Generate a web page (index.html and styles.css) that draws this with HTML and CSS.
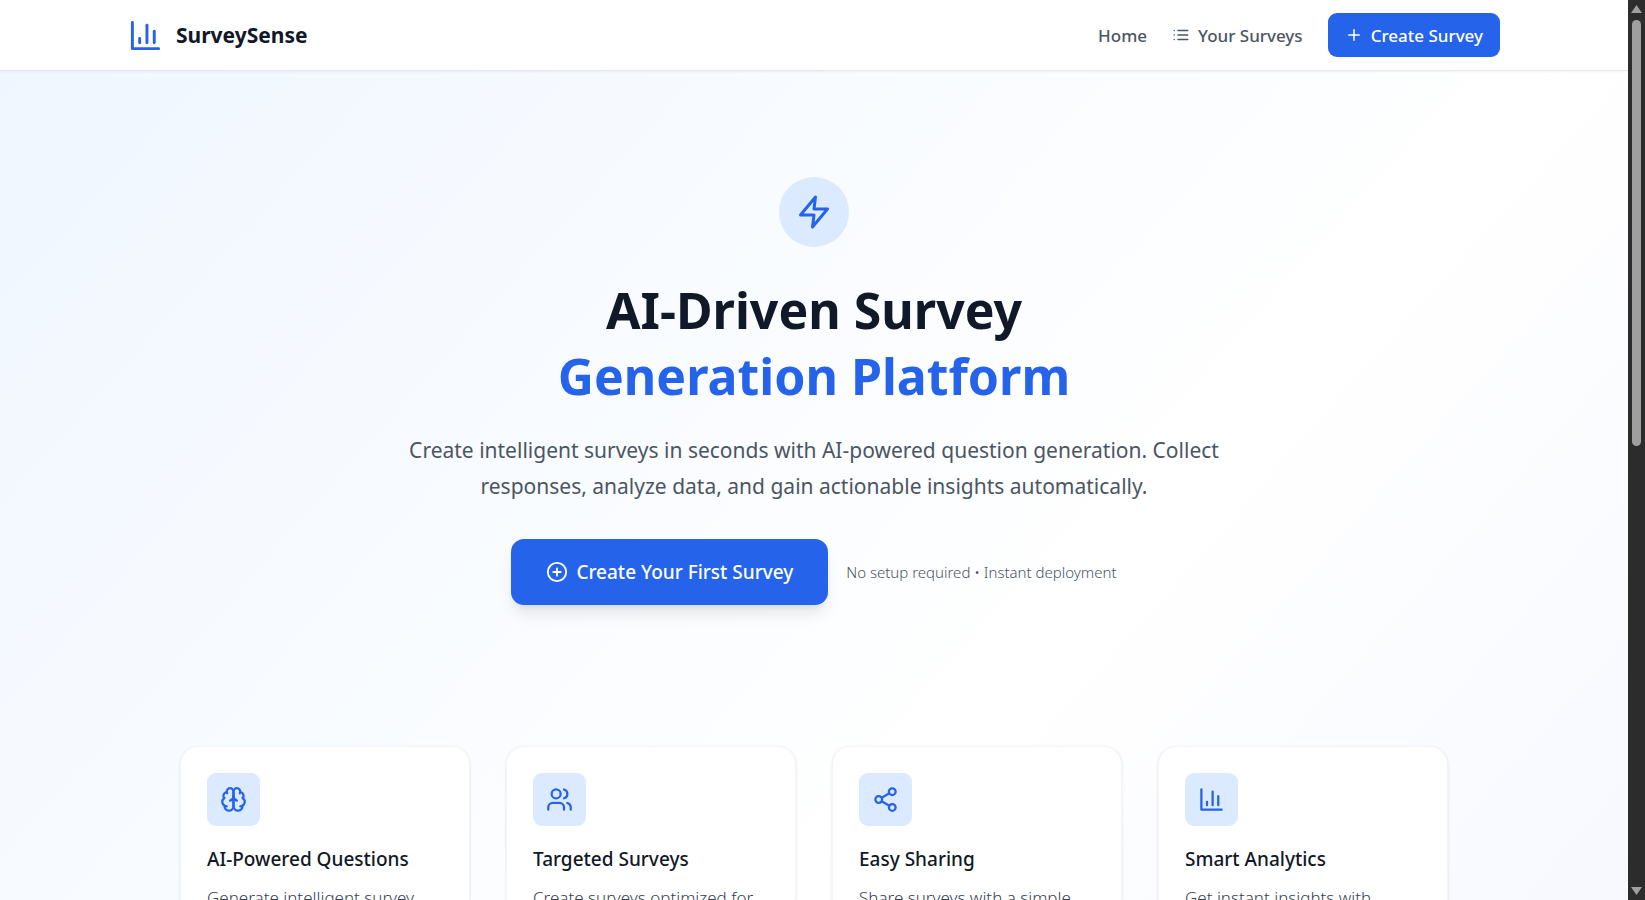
FILE: index.html
```html
<!DOCTYPE html>
<html lang="en">
<head>
<meta charset="utf-8">
<meta name="viewport" content="width=device-width, initial-scale=1">
<title>SurveySense</title>
<link rel="stylesheet" href="styles.css">
</head>
<body>
<div class="window">
  <div class="viewport">
    <div class="page">
      <header class="header">
        <div class="header-inner">
          <a class="brand" href="#">
            <svg class="icon brand-icon" viewBox="0 0 24 24" aria-hidden="true"><path d="M3 3v18h18"/><path d="M18 17V9"/><path d="M13 17V5"/><path d="M8 17v-3"/></svg>
            <span>SurveySense</span>
          </a>
          <nav class="nav">
            <a class="nav-link" href="#">Home</a>
            <a class="nav-link" href="#">
              <svg class="icon nav-icon" viewBox="0 0 24 24" aria-hidden="true"><path d="M8 6h13"/><path d="M8 12h13"/><path d="M8 18h13"/><path d="M3 6h.01"/><path d="M3 12h.01"/><path d="M3 18h.01"/></svg>
              <span>Your Surveys</span>
            </a>
            <a class="nav-button" href="#">
              <svg class="icon nav-icon" viewBox="0 0 24 24" aria-hidden="true"><path d="M5 12h14"/><path d="M12 5v14"/></svg>
              <span>Create Survey</span>
            </a>
          </nav>
        </div>
      </header>
      <main>
        <section class="hero">
          <div class="hero-badge">
            <svg class="icon hero-icon" viewBox="0 0 24 24" aria-hidden="true"><path d="M13 2 3 14h9l-1 8 10-12h-9l1-8z"/></svg>
          </div>
          <h1 class="hero-title">AI-Driven Survey <span class="accent">Generation Platform</span></h1>
          <p class="hero-text">Create intelligent surveys in seconds with AI-powered question generation. Collect responses, analyze data, and gain actionable insights automatically.</p>
          <div class="hero-actions">
            <a class="cta" href="#">
              <svg class="icon cta-icon" viewBox="0 0 24 24" aria-hidden="true"><circle cx="12" cy="12" r="10"/><path d="M8 12h8"/><path d="M12 8v8"/></svg>
              <span>Create Your First Survey</span>
            </a>
            <span class="hero-note">No setup required • Instant deployment</span>
          </div>
        </section>
        <section class="features">
          <article class="card">
            <div class="card-badge"><svg class="icon card-icon" viewBox="0 0 24 24" aria-hidden="true"><path d="M12 5a3 3 0 1 0-5.997.125 4 4 0 0 0-2.526 5.77 4 4 0 0 0 .556 6.588A4 4 0 1 0 12 18Z"/><path d="M12 5a3 3 0 1 1 5.997.125 4 4 0 0 1 2.526 5.77 4 4 0 0 1-.556 6.588A4 4 0 1 1 12 18Z"/><path d="M15 13a4.5 4.5 0 0 1-3-4 4.5 4.5 0 0 1-3 4"/><path d="M17.599 6.5a3 3 0 0 0 .399-1.375"/><path d="M6.003 5.125A3 3 0 0 0 6.401 6.5"/><path d="M3.477 10.896a4 4 0 0 1 .585-.396"/><path d="M19.938 10.5a4 4 0 0 1 .585.396"/><path d="M6 18a4 4 0 0 1-1.967-.516"/><path d="M19.967 17.484A4 4 0 0 1 18 18"/></svg></div>
            <h3 class="card-title">AI-Powered Questions</h3>
            <p class="card-text">Generate intelligent survey</p>
          </article>
          <article class="card">
            <div class="card-badge"><svg class="icon card-icon" viewBox="0 0 24 24" aria-hidden="true"><path d="M16 21v-2a4 4 0 0 0-4-4H6a4 4 0 0 0-4 4v2"/><circle cx="9" cy="7" r="4"/><path d="M22 21v-2a4 4 0 0 0-3-3.87"/><path d="M16 3.13a4 4 0 0 1 0 7.75"/></svg></div>
            <h3 class="card-title">Targeted Surveys</h3>
            <p class="card-text">Create surveys optimized for</p>
          </article>
          <article class="card">
            <div class="card-badge"><svg class="icon card-icon" viewBox="0 0 24 24" aria-hidden="true"><circle cx="18" cy="5" r="3"/><circle cx="6" cy="12" r="3"/><circle cx="18" cy="19" r="3"/><path d="m8.59 13.51 6.83 3.98"/><path d="m15.41 6.51-6.82 3.98"/></svg></div>
            <h3 class="card-title">Easy Sharing</h3>
            <p class="card-text">Share surveys with a simple</p>
          </article>
          <article class="card">
            <div class="card-badge"><svg class="icon card-icon" viewBox="0 0 24 24" aria-hidden="true"><path d="M3 3v18h18"/><path d="M18 17V9"/><path d="M13 17V5"/><path d="M8 17v-3"/></svg></div>
            <h3 class="card-title">Smart Analytics</h3>
            <p class="card-text">Get instant insights with</p>
          </article>
        </section>
      </main>
    </div>
  </div>
  <div class="scrollbar" aria-hidden="true">
    <svg class="arrow" viewBox="0 0 11 8"><path d="M5.500 0 11 8H0z"/></svg>
    <div class="track"><div class="thumb"></div></div>
    <svg class="arrow" viewBox="0 0 11 8"><path d="M5.500 8 11 0H0z"/></svg>
  </div>
</div>
</body>
</html>
```
FILE: styles.css
```css
* { box-sizing: border-box; }

body {
  margin: 0;
  font-family: "Noto Sans", "Open Sans", sans-serif;
  color: #111827;
}

h1, h3, p { margin: 0; }
a { color: inherit; text-decoration: none; }

.window { display: flex; height: 100vh; }
.viewport { flex: 1; min-width: 0; overflow: hidden; }

.page {
  min-height: 204vh;
  background: linear-gradient(to bottom right, #eff6ff, #ffffff, #eef2ff);
}

.icon {
  display: block;
  flex: none;
  fill: none;
  stroke: currentColor;
  stroke-width: 2;
  stroke-linecap: round;
  stroke-linejoin: round;
}

/* Header */
.header {
  background: #ffffff;
  border-bottom: 1px solid #e5e7eb;
  box-shadow: 0 1px 2px rgba(0, 0, 0, 0.05);
}
.header-inner {
  display: flex;
  align-items: center;
  justify-content: space-between;
  max-width: 1408px;
  height: 70px;
  margin: 0 auto;
  padding: 0 18px;
}
.brand {
  display: flex;
  align-items: center;
  gap: 13px;
  font-size: 21px;
  font-weight: 700;
}
.brand-icon { width: 35px; height: 35px; color: #2563eb; }
.nav {
  display: flex;
  align-items: center;
  gap: 25px;
  font-size: 17px;
  font-weight: 500;
}
.nav-link { display: flex; align-items: center; gap: 8px; color: #4b5563; }
.nav-icon { width: 18px; height: 18px; }
.nav-button {
  display: flex;
  align-items: center;
  gap: 8px;
  height: 44px;
  padding: 0 17px;
  border-radius: 9px;
  background: #2563eb;
  color: #ffffff;
}

/* Hero */
.hero {
  display: flex;
  flex-direction: column;
  align-items: center;
  max-width: 986px;
  margin: 0 auto;
  padding: 106px 18px 0;
  text-align: center;
}
.hero-badge {
  display: grid;
  place-items: center;
  width: 70px;
  height: 70px;
  border-radius: 50%;
  background: #dbeafe;
  color: #2563eb;
}
.hero-icon { width: 36px; height: 36px; }
.hero-title {
  margin-top: 30px;
  font-size: 50px;
  font-weight: 700;
  line-height: 66px;
}
.accent { display: block; color: #2563eb; }
.hero-text {
  max-width: 845px;
  margin-top: 23px;
  font-size: 21px;
  line-height: 36px;
  color: #4b5563;
}
.hero-actions { display: flex; align-items: center; gap: 18px; margin-top: 35px; }
.cta {
  display: flex;
  align-items: center;
  gap: 8px;
  height: 66px;
  padding: 0 35px;
  border-radius: 13px;
  background: #2563eb;
  box-shadow: 0 11px 16px -3px rgba(0, 0, 0, 0.1), 0 4px 7px -4px rgba(0, 0, 0, 0.1);
  color: #ffffff;
  font-size: 19px;
  font-weight: 500;
}
.cta-icon { width: 22px; height: 22px; }
.hero-note { font-size: 15px; font-weight: 300; color: #4b5563; }

/* Features */
.features {
  display: grid;
  grid-template-columns: repeat(4, 1fr);
  gap: 36px;
  max-width: 1268px;
  margin: 141px auto 0;
}
.card {
  min-height: 260px;
  padding: 26px;
  border: 1px solid #f3f4f6;
  border-radius: 18px;
  background: #ffffff;
  box-shadow: 0 1px 3px rgba(0, 0, 0, 0.1), 0 1px 2px -1px rgba(0, 0, 0, 0.1);
}
.card-badge {
  display: grid;
  place-items: center;
  width: 53px;
  height: 53px;
  border-radius: 9px;
  background: #dbeafe;
  color: #2563eb;
}
.card-icon { width: 27px; height: 27px; }
.card-title {
  margin-top: 18px;
  font-size: 19px;
  font-weight: 500;
  line-height: 30px;
}
.card-text {
  margin-top: 9px;
  font-size: 17px;
  font-weight: 300;
  line-height: 29px;
  color: #374151;
  white-space: nowrap;
}

/* Scrollbar */
.scrollbar {
  display: flex;
  flex-direction: column;
  align-items: center;
  gap: 7px;
  width: 17px;
  padding: 5px 0;
  background: #2c2c2c;
}
.arrow { width: 11px; height: 8px; fill: #9f9f9f; }
.track { flex: 1; width: 9px; }
.thumb { height: 49.5%; border-radius: 5px; background: #9f9f9f; }
```
